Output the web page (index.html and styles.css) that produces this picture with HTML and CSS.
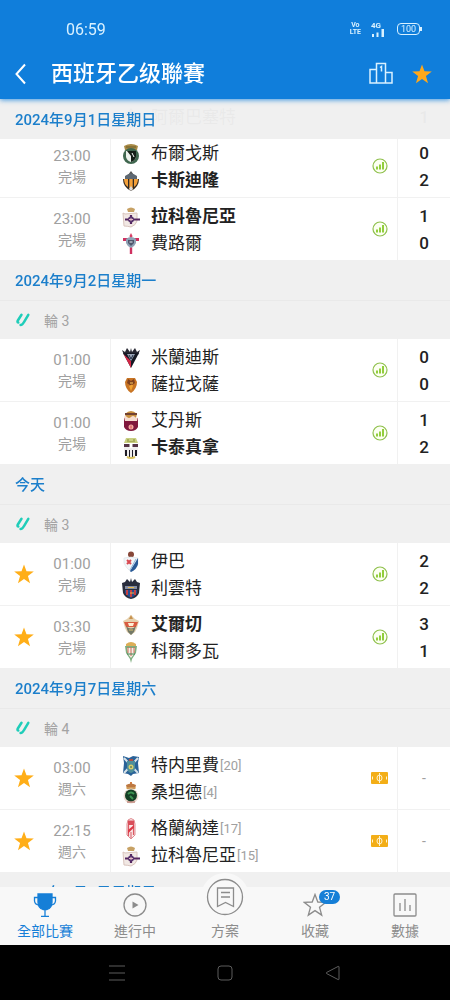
FILE: index.html
```html
<!DOCTYPE html>
<html lang="zh-Hant">
<head>
<meta charset="utf-8">
<meta name="viewport" content="width=device-width, initial-scale=1">
<title>西班牙乙级聯賽</title>
<link rel="stylesheet" href="styles.css">
</head>
<body>
<svg class="sprite" aria-hidden="true">
  <symbol id="star" viewBox="0 0 24 24"><path d="M12 1.500l2.700 7.600 8 .2-6.400 4.900 2.300 7.800-6.600-4.600L5.400 22l2.300-7.800L1.300 9.300l8-.2z"/></symbol>
  <symbol id="stats" viewBox="0 0 16 16"><circle cx="8" cy="8" r="7" fill="#fcfff2" stroke="#8fc04d" stroke-width="1.200"/><path d="M4 8.500h2v3H4zM7 6.500h2v5H7zM10 4h2v7.500h-2z" fill="#92ce3c"/></symbol>
  <symbol id="pitch" viewBox="0 0 17 12"><rect width="17" height="12" rx="1" fill="#f3ae17"/><path d="M8.500 1v10M1.500 4.500v3M15.500 4.500v3" stroke="#fff3d0"/><ellipse cx="8.500" cy="6" rx="2.500" ry="3" fill="none" stroke="#fff3d0"/></symbol>
  <symbol id="laliga" viewBox="0 0 16 16"><path d="M6.500 2.800L3 8.200Q1.800 10.300 3.300 10.500M13.300 2.800L9 10Q7.500 13 5.600 13" fill="none" stroke="#1fcdb9" stroke-width="2.500" stroke-linecap="round"/></symbol>
  <symbol id="burgos" viewBox="0 0 20 22"><path d="M3 3q7-4 14 0l-1 4H4z" fill="#a88a45"/><path d="M5 4h10" stroke="#6d5c2b"/><circle cx="10" cy="13" r="8" fill="#40674f"/><path d="M5 8h10v6q-1 4-5 5-4-1-5-5z" fill="#edf2ed"/><path d="M10 8h5v6q-1 4-5 5zM6 8l4 5V8z" fill="#152018"/><path d="M11 10l2 4" stroke="#fff"/></symbol>
  <symbol id="castellon" viewBox="0 0 20 22"><path d="M10 1l3 4H7z" fill="#555"/><path d="M4 6q6-5 12 0v3H4z" fill="#5e6872"/><path d="M2 9h16q0 8-8 12Q2 17 2 9z" fill="#332a22"/><path d="M3 9h4v8q-4-3-4-8zM8.300 9h3.400v10l-1.700 1-1.700-1zM13 9h4q0 5-4 8z" fill="#f4a13b"/><path d="M10 16l2 3-2 2-2-2z" fill="#ddd"/></symbol>
  <symbol id="depor" viewBox="0 0 20 22"><path d="M6 3q4-3 8 0l-1 3H7z" fill="#c7a164"/><path d="M2 7l2 1 12-1v8q-1 4-6 6-4-1-7-1z" fill="#f1e8e4" stroke="#d9c4bd"/><path d="M10 9v9M4 13.500h15" stroke="#54245f" stroke-width="2.200"/><circle cx="10" cy="13.500" r="3" fill="#59346f"/><path d="M8 13.500h4M10 12v3" stroke="#e4b9c2"/></symbol>
  <symbol id="celta" viewBox="0 0 20 22"><path d="M10 0l1.500 3-1 3h-1l-1-3z" fill="#d83f66"/><path d="M10 5v16" stroke="#cf3160" stroke-width="2.400"/><path d="M2 6.500h16" stroke="#cf3160" stroke-width="3"/><path d="M5 6q5-4 10 0v4q-1 3-5 5-4-2-5-5z" fill="#8fa2b5"/><path d="M7 7h6v3l-3 3-3-3z" fill="#4e566c"/><path d="M8.500 9h3" stroke="#e8edf2"/></symbol>
  <symbol id="mirandes" viewBox="0 0 20 22"><path d="M1 3l3 2 2-4 3 4 1-4 1 4 3-4 2 4 3-2-2 5H3z" fill="#272732"/><path d="M2 6h16l-8 15z" fill="#151823"/><path d="M2.500 7l7.500 14V14z" fill="#d42645"/><path d="M6 7h8l-4 7z" fill="#9aa5b7"/><path d="M8 8l2 4 2-4" fill="none" stroke="#243047"/></symbol>
  <symbol id="zaragoza" viewBox="0 0 20 22"><path d="M6 4h8l2 4q0 7-6 11-6-4-6-11z" fill="#c87424"/><path d="M7 5l3 2 3-2 1 4-4 3-4-3z" fill="#7e411f"/><path d="M8 12q4-3 4 0l-2 5z" fill="#f1a434"/><path d="M9 9h3" stroke="#ffce65"/></symbol>
  <symbol id="eldense" viewBox="0 0 20 22"><path d="M4 4q6-6 12 0l-1 4H5z" fill="#c99040"/><path d="M4 4h12" stroke="#714131" stroke-width="2"/><path d="M3 8h14v9q-2 4-7 4t-7-4z" fill="#81183d"/><path d="M3 7q1-2 3 0t4 0 4 0 3 0l-1 4H4z" fill="#f6ddd0"/><circle cx="10" cy="17" r="2.500" fill="#f3aaa0"/><path d="M10 15.500v3" stroke="#d33e4c"/></symbol>
  <symbol id="cartagena" viewBox="0 0 20 22"><path d="M5 1h10l2 5H3z" fill="#c9cf82"/><path d="M6 5V2h2v2h4V2h2v3z" fill="#a9af5c"/><path d="M3 7h14v10q-3 4-7 4t-7-4z" fill="#f0eeee"/><path d="M3 7h14v3H3z" fill="#543345"/><path d="M4 13h2v6H4zM8 13h1v7H8zM11 13h1v7h-1zM14 13h2v6h-2z" fill="#1d1b25"/><path d="M10 6v5" stroke="#fff" stroke-width="3"/><path d="M6 20q4 2 8 0" stroke="#d9c15e" stroke-width="2" fill="none"/></symbol>
  <symbol id="eibar" viewBox="0 0 20 22"><circle cx="10" cy="3.500" r="3" fill="#874738"/><path d="M3 7l7-1 7 1v6q-1 5-7 8-6-5-7-9z" fill="#f3f6f8" stroke="#d8e0e6" stroke-width=".6"/><path d="M17 7v6q-1 5-7 8l-1-1z" fill="#295a97"/><path d="M15 8l-6 11" stroke="#8fb8dd"/><path d="M6 9l4 4M10 9l-4 4" stroke="#d84850" stroke-width="2"/></symbol>
  <symbol id="levante" viewBox="0 0 20 22"><path d="M1 5l3-1 2-3 3 3 1-4 1 4 3-3 2 3 3 1-1 10q-2 5-8 6-6-1-8-6z" fill="#292d3d"/><path d="M4 8h12v3H4z" fill="#858da1"/><path d="M4 12h12v3q-2 3-6 5-4-2-6-5z" fill="#234d91"/><path d="M6 12v5M10 12v7M14 12v5" stroke="#c64043" stroke-width="2"/><path d="M7 9.500h6M9 15h4" stroke="#e8b74b"/></symbol>
  <symbol id="elche" viewBox="0 0 20 22"><path d="M10 1l4 4 4 2-2 7-2 4-4 3-4-3-2-4-2-7 4-2z" fill="#e5d0ad"/><path d="M8 5l2-4 2 4z" fill="#c7924f"/><path d="M3 8h14l-2 5H5z" fill="#d95c40"/><path d="M5 12q5 5 10 0l-2 6-3 3-3-3z" fill="#737968"/><path d="M7 9h6l-1 3H8z" fill="#fff0d5"/><path d="M8 16h4" stroke="#dac16d"/></symbol>
  <symbol id="cordoba" viewBox="0 0 20 22"><path d="M5 3q5-4 10 0v3H5z" fill="#dcae57"/><path d="M4 5h12l-1 7-4 6-1 4-1-4-4-6z" fill="#7fae7f"/><path d="M6 7h8l-1 6-3 4-3-4z" fill="#f7efe7"/><path d="M7 6v6M10 6v9M13 6v6" stroke="#cf6b56"/><path d="M6 13h8" stroke="#418455"/></symbol>
  <symbol id="tenerife" viewBox="0 0 20 22"><path d="M2 1l6 2 4-2 6 1-1 6 1 10-6 1-2 2-3-2-5-1 1-10z" fill="#2a6298"/><path d="M3 3l14 15M17 3L3 18" stroke="#d7e2e8" stroke-width="2"/><path d="M6 6h8v8q-1 3-4 4-3-1-4-4z" fill="#4f8f9a"/><circle cx="10" cy="12" r="2.500" fill="#d9cf6b"/><path d="M8 4h4v2H8z" fill="#ad4f47"/><path d="M9 12h2" stroke="#245c61"/></symbol>
  <symbol id="racing" viewBox="0 0 20 22"><path d="M10 0v3" stroke="#d67f42" stroke-width="2"/><path d="M5 3q5-3 10 0l-1 4H6z" fill="#bd7841"/><path d="M5 6h10" stroke="#e2bb71"/><circle cx="10" cy="14" r="7.500" fill="#eddcd2"/><circle cx="10" cy="13.500" r="6" fill="#153f25"/><path d="M7 12q3-3 6 0M9 14l3 3" fill="none" stroke="#3e9452" stroke-width="2"/><path d="M6 20h8" stroke="#a95f54"/></symbol>
  <symbol id="granada" viewBox="0 0 20 22"><path d="M7 2q3-3 6 0l1 4v11l-4 4-4-4V6z" fill="#fae8e8" stroke="#df8b91"/><path d="M7 2.500h6V7H7z" fill="#d94e5a"/><path d="M7.500 7v11M12.500 7v10" stroke="#dc5a64" stroke-width="1.200"/><path d="M7 12l6-5v2.500l-6 6z" fill="#dc3947"/><path d="M10 14v6" stroke="#d55460"/></symbol>
</svg>

<div class="app">
  <header class="top">
    <div class="status">
      <span class="clock">06:59</span>
      <span class="volte"><b>Vo</b><b>LTE</b></span>
      <span class="signal"><b>4G</b><svg viewBox="0 0 14 8"><path d="M1 8V5h2v3zM5.500 8V3.500h2V8zM10.500 8V0h2.500v8z"/></svg></span>
      <span class="battery">100</span>
    </div>
    <div class="titlebar">
      <button class="icon-btn back" aria-label="返回"><svg viewBox="0 0 24 24"><path d="M15 2.500L6.500 12l8.500 9.500"/></svg></button>
      <h1>西班牙乙级聯賽</h1>
      <button class="icon-btn podium" aria-label="排名"><svg viewBox="0 0 26 24"><path d="M8.500 21V1.500h9V21M8.500 7.500H2V21h22V10.500h-6.500M12 5.500l1.500-1v5"/></svg></button>
      <button class="icon-btn fav" aria-label="收藏聯賽"><svg><use href="#star"/></svg></button>
    </div>
  </header>

  <main class="list">
    <section class="day scrolled">
      <h2>2024年9月1日星期日</h2>
      <ul>
        <li class="match">
          <div class="time"></div>
          <div class="teams"><div></div><div class="team"><svg><use href="#castellon"/></svg><span>阿爾巴塞特</span></div></div>
          <div class="extra"></div><div class="score"><b></b><b>1</b></div>
        </li>
        <li class="match">
          <div class="time"><time>23:00</time><span>完場</span></div>
          <div class="teams"><div class="team"><svg><use href="#burgos"/></svg><span>布爾戈斯</span></div><div class="team win"><svg><use href="#castellon"/></svg><span>卡斯迪隆</span></div></div>
          <div class="extra"><svg class="stats"><use href="#stats"/></svg></div><div class="score"><b>0</b><b>2</b></div>
        </li>
        <li class="match">
          <div class="time"><time>23:00</time><span>完場</span></div>
          <div class="teams"><div class="team win"><svg><use href="#depor"/></svg><span>拉科魯尼亞</span></div><div class="team"><svg><use href="#celta"/></svg><span>費路爾</span></div></div>
          <div class="extra"><svg class="stats"><use href="#stats"/></svg></div><div class="score"><b>1</b><b>0</b></div>
        </li>
      </ul>
    </section>

    <section class="day">
      <h2>2024年9月2日星期一</h2>
      <h3><svg><use href="#laliga"/></svg>輪 3</h3>
      <ul>
        <li class="match">
          <div class="time"><time>01:00</time><span>完場</span></div>
          <div class="teams"><div class="team"><svg><use href="#mirandes"/></svg><span>米蘭迪斯</span></div><div class="team"><svg><use href="#zaragoza"/></svg><span>薩拉戈薩</span></div></div>
          <div class="extra"><svg class="stats"><use href="#stats"/></svg></div><div class="score"><b>0</b><b>0</b></div>
        </li>
        <li class="match">
          <div class="time"><time>01:00</time><span>完場</span></div>
          <div class="teams"><div class="team"><svg><use href="#eldense"/></svg><span>艾丹斯</span></div><div class="team win"><svg><use href="#cartagena"/></svg><span>卡泰真拿</span></div></div>
          <div class="extra"><svg class="stats"><use href="#stats"/></svg></div><div class="score"><b>1</b><b>2</b></div>
        </li>
      </ul>
    </section>

    <section class="day">
      <h2>今天</h2>
      <h3><svg><use href="#laliga"/></svg>輪 3</h3>
      <ul>
        <li class="match">
          <button class="mark" aria-label="取消收藏"><svg><use href="#star"/></svg></button>
          <div class="time"><time>01:00</time><span>完場</span></div>
          <div class="teams"><div class="team"><svg><use href="#eibar"/></svg><span>伊巴</span></div><div class="team"><svg><use href="#levante"/></svg><span>利雲特</span></div></div>
          <div class="extra"><svg class="stats"><use href="#stats"/></svg></div><div class="score"><b>2</b><b>2</b></div>
        </li>
        <li class="match">
          <button class="mark" aria-label="取消收藏"><svg><use href="#star"/></svg></button>
          <div class="time"><time>03:30</time><span>完場</span></div>
          <div class="teams"><div class="team win"><svg><use href="#elche"/></svg><span>艾爾切</span></div><div class="team"><svg><use href="#cordoba"/></svg><span>科爾多瓦</span></div></div>
          <div class="extra"><svg class="stats"><use href="#stats"/></svg></div><div class="score"><b>3</b><b>1</b></div>
        </li>
      </ul>
    </section>

    <section class="day">
      <h2>2024年9月7日星期六</h2>
      <h3><svg><use href="#laliga"/></svg>輪 4</h3>
      <ul>
        <li class="match">
          <button class="mark" aria-label="取消收藏"><svg><use href="#star"/></svg></button>
          <div class="time"><time>03:00</time><span>週六</span></div>
          <div class="teams"><div class="team"><svg><use href="#tenerife"/></svg><span>特内里費</span><small>[20]</small></div><div class="team"><svg><use href="#racing"/></svg><span>桑坦德</span><small>[4]</small></div></div>
          <div class="extra"><svg class="pitch"><use href="#pitch"/></svg></div><div class="score none">-</div>
        </li>
        <li class="match">
          <button class="mark" aria-label="取消收藏"><svg><use href="#star"/></svg></button>
          <div class="time"><time>22:15</time><span>週六</span></div>
          <div class="teams"><div class="team"><svg><use href="#granada"/></svg><span>格蘭納達</span><small>[17]</small></div><div class="team"><svg><use href="#depor"/></svg><span>拉科魯尼亞</span><small>[15]</small></div></div>
          <div class="extra"><svg class="pitch"><use href="#pitch"/></svg></div><div class="score none">-</div>
        </li>
      </ul>
    </section>

    <section class="day">
      <h2>2024年9月8日星期日</h2>
    </section>
  </main>

  <nav class="tabs">
    <a href="#all" class="tab active"><span class="tab-icon"><svg viewBox="0 0 24 24"><path d="M5 1h14v8q0 6-5 7.500h-4Q5 15 5 9z" fill="currentColor"/><path d="M5 4.500H1.500V8Q2 12 6.500 12M19 4.500h3.500V8q-.5 4-5 4M12 16v7M8 23.300h8"/></svg></span>全部比賽</a>
    <a href="#live" class="tab"><span class="tab-icon"><svg viewBox="0 0 24 24"><circle cx="12" cy="12" r="11"/><path d="M9.500 8.500l6 3.500-6 3.500z" fill="currentColor" stroke="none"/></svg></span>進行中</a>
    <a href="#tips" class="tab"><span class="tab-icon bubble"><svg viewBox="0 0 38 38"><circle cx="19" cy="19" r="17.500"/><path d="M11.500 10h16v18.500l-8-4-8 4zM15 14.500h9M15 19h9"/></svg></span>方案</a>
    <a href="#fav" class="tab"><span class="tab-icon"><svg viewBox="0 0 24 24"><path d="M12 1.500l2.800 7.500 8 .3-6.300 5 2.200 7.800-6.700-4.500-6.700 4.500 2.200-7.800-6.300-5 8-.3z"/></svg><span class="count">37</span></span>收藏</a>
    <a href="#data" class="tab"><span class="tab-icon"><svg viewBox="0 0 24 24"><rect x="1" y="1" width="22" height="22" rx="1"/><path d="M7 10v8M12 6v12M17 12v6"/></svg></span>數據</a>
  </nav>

  <footer class="system">
    <button aria-label="最近使用"><svg viewBox="0 0 18 18"><path d="M1 2h16M1 9h16M1 16h16"/></svg></button>
    <button aria-label="主畫面"><svg viewBox="0 0 18 18"><rect x="2" y="2" width="14" height="14" rx="3"/></svg></button>
    <button aria-label="返回上一頁"><svg viewBox="0 0 18 18"><path d="M15 3v12q0 1-1 .5L2.500 9.500q-1-.5 0-1L14 2.500q1-.5 1 .5z"/></svg></button>
  </footer>
</div>
</body>
</html>
```

FILE: styles.css
```css
* { box-sizing: border-box; }
body, h1, h2, h3, ul { margin: 0; padding: 0; }
ul { list-style: none; }
body {
  font-family: Roboto, "Noto Sans CJK TC", sans-serif;
  color: #222;
  background: #fff;
}
button { border: 0; padding: 0; background: none; font: inherit; color: inherit; }
svg { display: block; }
.sprite { position: absolute; width: 0; height: 0; }

.app { display: flex; flex-direction: column; height: 100vh; }

.top {
  position: relative;
  z-index: 3;
  flex: none;
  padding: 4px 17px 6px 10px;
  background: #107edb;
  color: #fff;
  box-shadow: 0 1px 5px rgba(16, 126, 219, .8);
}
.status { display: flex; align-items: center; height: 50px; padding: 0 13px 0 56px; color: #d9f1ff; }
.clock { margin-right: auto; font-size: 16px; }
.volte { display: grid; margin-right: 10px; font-size: 7px; line-height: 7px; text-align: center; }
.signal { display: grid; justify-items: end; margin-right: 12px; font-size: 8px; line-height: 7px; }
.signal b { justify-self: start; }
.signal svg { width: 14px; height: 8px; fill: currentColor; }
.battery {
  position: relative;
  width: 23px;
  border: 1px solid currentColor;
  border-radius: 4px;
  font-size: 9px;
  line-height: 10px;
  text-align: center;
}
.battery::after {
  content: "";
  position: absolute;
  top: 3px;
  right: -3px;
  width: 2px;
  height: 4px;
  background: currentColor;
}
.titlebar { display: flex; align-items: center; height: 39px; }
.titlebar h1 { flex: 1; margin-left: 17px; font-size: 22px; font-weight: 500; line-height: 32px; }
.icon-btn svg { width: 24px; height: 24px; fill: none; stroke: currentColor; stroke-width: 2; }
.podium { margin-right: 17px; color: #d9f1ff; }
.podium svg { width: 26px; stroke-width: 1.5; }
.fav svg { width: 22px; height: 22px; fill: #ffa81a; stroke: none; }

.list { flex: 1; min-height: 0; overflow: hidden; background: #f0f0f0; }
.scrolled { margin-top: -67px; }
.day h2 {
  position: sticky;
  top: 0;
  z-index: 1;
  height: 40px;
  padding: 0 15px;
  background: rgba(240, 240, 240, .97);
  color: #1c7fcb;
  font-size: 15px;
  font-weight: 500;
  line-height: 42px;
}
.day h3 {
  display: flex;
  align-items: center;
  gap: 13px;
  height: 39px;
  padding: 0 15px;
  border-top: 1px solid #e9e9e9;
  color: #a3a3a3;
  font-size: 14px;
  font-weight: 400;
}
.day h3 svg { width: 16px; height: 16px; }

.match {
  display: grid;
  grid-template-columns: 48px 62px 1fr 36px 53px;
  align-items: center;
  height: 62px;
  background: #fff;
}
.match + .match { height: 63px; border-top: 1px solid #f1f1f1; }
.mark { justify-self: center; }
.mark svg { width: 22px; height: 22px; fill: #ffae18; }
.time {
  grid-column: 2;
  display: grid;
  align-content: center;
  height: 100%;
  padding: 2px 14px 0 0;
  color: #a0a0a0;
  font-size: 14px;
  line-height: 21px;
  text-align: center;
}
.time time { font-size: 15px; }
.teams {
  display: grid;
  grid-template-rows: 27px 27px;
  align-content: center;
  height: 100%;
  padding: 2px 0 0 10px;
  border-left: 1px solid #f1f1f1;
}
.team { display: flex; align-items: center; font-size: 17px; line-height: 27px; white-space: nowrap; }
.team svg { width: 20px; height: 22px; margin-right: 10px; }
.team small { margin-left: 1px; color: #a0a0a0; font-size: 13px; }
.win { font-weight: 700; }
.stats { width: 16px; height: 16px; margin-left: 11px; }
.pitch { width: 17px; height: 12px; margin-left: 10px; }
.score {
  display: grid;
  grid-auto-rows: 27px;
  align-content: center;
  height: 100%;
  padding-top: 2px;
  border-left: 1px solid #f1f1f1;
  font-size: 17px;
  line-height: 27px;
  text-align: center;
}
.score b { font-weight: 500; }
.score.none { padding-top: 0; color: #a0a0a0; font-size: 14px; }

.tabs {
  position: relative;
  z-index: 2;
  display: grid;
  grid-template-columns: repeat(5, 1fr);
  grid-template-rows: 100%;
  flex: none;
  height: 58px;
  background: #f8f8f8;
}
.tab {
  display: flex;
  flex-direction: column;
  align-items: center;
  justify-content: flex-end;
  padding-bottom: 3px;
  color: #8c8c8c;
  font-size: 14px;
  line-height: 22px;
  text-decoration: none;
}
.tab.active { color: #167fd7; }
.tab-icon { position: relative; margin-bottom: 3px; }
.tab-icon svg { width: 24px; height: 24px; fill: none; stroke: currentColor; stroke-width: 1.3; }
.tab-icon.bubble { padding: 5px; margin-bottom: -1px; border-radius: 50%; background: #f8f8f8; }
.bubble svg { width: 38px; height: 38px; }
.count {
  position: absolute;
  top: -3px;
  left: 16px;
  width: 21px;
  border-radius: 7px;
  background: #167fd7;
  color: #fff;
  font-size: 10px;
  line-height: 14px;
  text-align: center;
}

.system {
  display: flex;
  justify-content: center;
  align-items: center;
  gap: 20%;
  flex: none;
  height: 55px;
  background: #000;
  color: #5c5c5c;
}
.system svg { width: 18px; height: 18px; fill: none; stroke: currentColor; }
```
